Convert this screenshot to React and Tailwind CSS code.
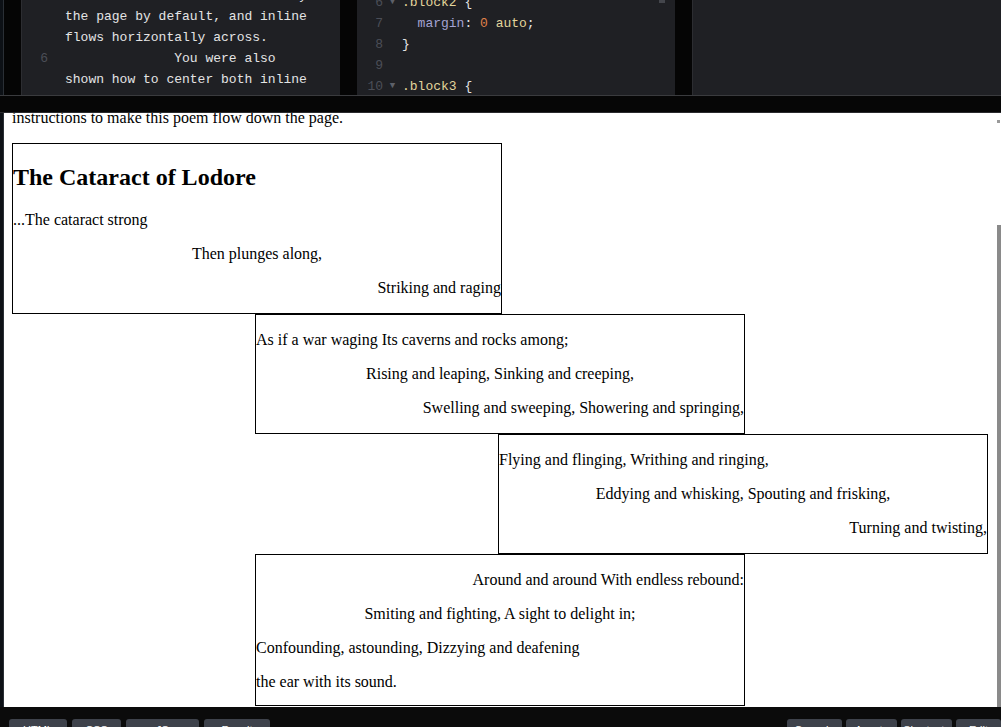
const mono = { fontFamily: '"Liberation Mono", "DejaVu Sans Mono", monospace' };

function CodeLeft() {
  const lines = [
    { n: "", t: "block elements stack vertically" },
    { n: "", t: "the page by default, and inline" },
    { n: "", t: "flows horizontally across." },
    { n: "6", t: "              You were also" },
    { n: "", t: "shown how to center both inline" },
    { n: "", t: "and block elements." },
  ];
  return (
    <div className="w-[319px] h-full bg-[#1f2024] border-l border-[#2c2d31] overflow-hidden text-[13px]" style={mono}>
      <div className="-mt-[15px]">
        {lines.map((l, i) => (
          <div key={i} className="flex leading-[21px] whitespace-pre">
            <span className="w-[26px] text-right text-[#4b4e57]">{l.n}</span>
            <span className="pl-[17px] text-[#e4e4e4]">{l.t}</span>
          </div>
        ))}
      </div>
    </div>
  );
}

function CodeMid() {
  const sel = "text-[#e2d59c]";
  const lines = [
    { n: "6", f: true, c: <span className={sel}>.block2 <span className="text-[#e4e4e4]">{"{"}</span></span> },
    {
      n: "7",
      c: (
        <span>
          {"  "}
          <span className="text-[#a4a3d3]">margin</span>
          <span className="text-[#e4e4e4]">: </span>
          <span className="text-[#e0824a]">0</span>
          <span className={sel}> auto</span>
          <span className="text-[#e4e4e4]">;</span>
        </span>
      ),
    },
    { n: "8", c: <span className="text-[#e4e4e4]">{"}"}</span> },
    { n: "9", c: "" },
    { n: "10", f: true, c: <span className={sel}>.block3 <span className="text-[#e4e4e4]">{"{"}</span></span> },
  ];
  return (
    <div className="relative w-[318px] h-full bg-[#1f2024] overflow-hidden text-[13px]" style={mono}>
      <div className="absolute right-[10px] top-0 w-[6px] h-[3px] bg-[#44464c]" />
      <div className="-mt-[8px] pl-[10px]">
        {lines.map((l, i) => (
          <div key={i} className="flex leading-[21px] whitespace-pre">
            <span className="w-[16px] text-right text-[#4b4e57]">{l.n}</span>
            <span className="w-[19px] text-center text-[9px] text-[#5d6069]">{l.f ? "▼" : ""}</span>
            <span>{l.c}</span>
          </div>
        ))}
      </div>
    </div>
  );
}

function Box({ className, children }) {
  return (
    <div className={`w-[490px] border border-black ${className}`}>{children}</div>
  );
}

function P({ align, children }) {
  return <p className={`my-4 leading-[18px] ${align}`}>{children}</p>;
}

function Preview() {
  return (
    <div className="flex-1 bg-white overflow-hidden text-black text-[16px]" style={{ fontFamily: '"Liberation Serif", "Times New Roman", serif' }}>
      <div className="-mt-[4px] px-2">
        <p className="leading-[18px] mb-[16px]">instructions to make this poem flow down the page.</p>
        <Box className="">
          <h2 className="text-2xl font-bold leading-[27px] my-5">The Cataract of Lodore</h2>
          <P align="text-left">...The cataract strong</P>
          <P align="text-center">Then plunges along,</P>
          <P align="text-right">Striking and raging</P>
        </Box>
        <Box className="mx-auto">
          <P align="text-left">As if a war waging Its caverns and rocks among;</P>
          <P align="text-center">Rising and leaping, Sinking and creeping,</P>
          <P align="text-right">Swelling and sweeping, Showering and springing,</P>
        </Box>
        <Box className="ml-auto">
          <P align="text-left">Flying and flinging, Writhing and ringing,</P>
          <P align="text-center">Eddying and whisking, Spouting and frisking,</P>
          <P align="text-right">Turning and twisting,</P>
        </Box>
        <Box className="mx-auto">
          <P align="text-right">Around and around With endless rebound:</P>
          <P align="text-center">Smiting and fighting, A sight to delight in;</P>
          <P align="text-left">Confounding, astounding, Dizzying and deafening</P>
          <p className="mt-4 mb-[14px] leading-[18px] text-left">the ear with its sound.</p>
        </Box>
      </div>
    </div>
  );
}

function Tab({ w, label }) {
  return (
    <div className={`${w} h-[8px] rounded-t-[3px] bg-[#3e424b] overflow-hidden text-center text-[11px] leading-[11px] pt-[6px] text-white`} style={{ fontFamily: '"Liberation Sans", Arial, sans-serif' }}>
      {label}
    </div>
  );
}

export default function App() {
  return (
    <div className="w-[1001px] h-[727px] flex flex-col bg-[#050505] overflow-hidden">
      {/* editors */}
      <div className="h-[95px] flex shrink-0">
        <div className="w-[4px] bg-[#0d1116] border-r border-[#2a2f35]" />
        <div className="w-[17px] bg-[#050505]" />
        <CodeLeft />
        <div className="w-[17px] bg-[#050505]" />
        <CodeMid />
        <div className="w-[17px] bg-[#050505]" />
        <div className="flex-1 bg-[#1f2024] border-l border-[#2c2d31]" />
      </div>
      <div className="h-[18px] shrink-0 bg-[#060606] border-t border-[#3a3b3e] border-b border-b-[#2a2b2e]" />

      {/* result */}
      <div className="flex-1 flex min-h-0">
        <div className="w-[4px] bg-[#0d1116] border-r border-[#2a2f35]" />
        <Preview />
        <div className="w-[5px] bg-white flex flex-col items-center">
          <div className="mt-[7px] w-[3px] h-[3px] bg-[#9a9a9a]" />
          <div className="mt-[102px] flex-1 w-[4px] bg-[#8a8a8a]" />
        </div>
      </div>

      {/* console bar */}
      <div className="h-[20px] shrink-0 bg-[#0b0b0b] flex items-end pl-[9px]">
        <div className="flex gap-[5px]">
          <Tab w="w-[58px]" label="HTML" />
          <Tab w="w-[49px]" label="CSS" />
          <Tab w="w-[73px]" label="JS" />
          <Tab w="w-[66px]" label="Result" />
        </div>
        <div className="ml-auto flex gap-[4px]">
          <Tab w="w-[55px]" label="Console" />
          <Tab w="w-[51px]" label="Assets" />
          <Tab w="w-[51px]" label="Shortcuts" />
          <Tab w="w-[45px]" label="Edit" />
        </div>
      </div>
    </div>
  );
}
